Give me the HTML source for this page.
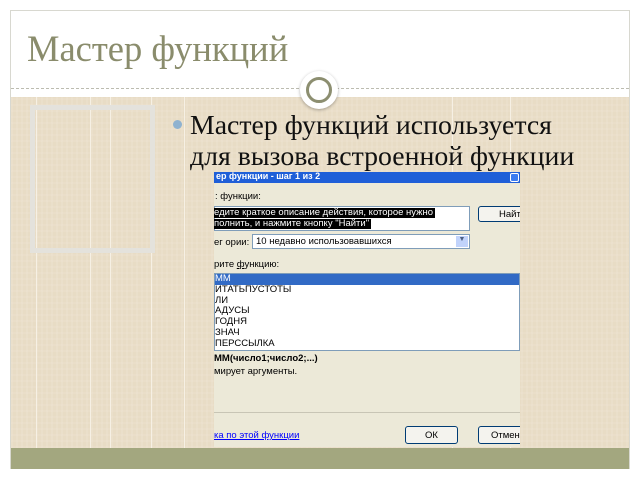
<!DOCTYPE html>
<html><head><meta charset="utf-8"><style>
*{margin:0;padding:0;box-sizing:border-box}
body{width:640px;height:480px;background:#fff;position:relative;overflow:hidden;font-family:"Liberation Sans",sans-serif}
.frame{position:absolute;left:10px;top:10px;width:620px;height:459px;border:1px solid #d8d8d0;background:#fff}
.title{position:absolute;left:27px;top:27px;font-family:"Liberation Serif",serif;font-size:36.5px;color:#8a8c6c}
.dash{position:absolute;left:11px;top:88px;width:618px;border-top:1px dashed #bcbcb0}
.tan{position:absolute;left:11px;top:97px;width:618px;height:351px;background:#e8dcc5;
background-image:repeating-linear-gradient(90deg,rgba(255,255,255,.08) 0 2px,transparent 2px 5px),repeating-linear-gradient(0deg,rgba(255,255,255,.07) 0 2px,transparent 2px 6px)}
.vl{position:absolute;top:97px;width:1px;height:351px;background:#f6f0e4}
.sq{position:absolute;left:30px;top:105px;width:125px;height:148px;border:5px solid #e4e2dc}
.circ{position:absolute;left:300px;top:71px;width:38px;height:38px;border-radius:50%;background:#fff;box-shadow:0 1px 3px rgba(0,0,0,.3)}
.circ:after{content:"";position:absolute;left:6px;top:6px;width:26px;height:26px;border-radius:50%;border:3px solid #8c8e70;box-sizing:border-box}
.olive{position:absolute;left:11px;top:448px;width:618px;height:21px;background:#a3a77f}
.bul{position:absolute;left:173px;top:120px;width:9px;height:9px;border-radius:50%;background:#8fb2d0}
.txt{position:absolute;left:190px;top:110px;font-family:"Liberation Serif",serif;font-size:27.8px;line-height:31px;color:#111;white-space:nowrap}
.shot{position:absolute;left:214px;top:172px;width:306px;height:275px;background:#ece9d8;font-size:9.5px;color:#000;overflow:hidden}
.tb{position:absolute;left:0;top:0;width:306px;height:11px;background:#1f5fd8;color:#fff;font-weight:bold;font-size:9px;line-height:9px;padding-left:2px}
.ab{position:absolute;white-space:nowrap}
</style></head><body>
<div class="frame"></div>
<div class="title">Мастер функций</div>
<div class="dash"></div>
<div class="tan"></div>
<div class="vl" style="left:36px"></div>
<div class="vl" style="left:90px"></div>
<div class="vl" style="left:110px"></div>
<div class="vl" style="left:151px"></div>
<div class="vl" style="left:184px"></div>
<div class="vl" style="left:452px"></div>
<div class="vl" style="left:510px"></div>
<div class="sq"></div>
<div class="circ"></div>
<div class="olive"></div>
<div class="bul"></div>
<div class="txt">Мастер функций используется<br>для вызова встроенной функции</div>
<div class="shot">
<div class="tb">ер функции - шаг 1 из 2</div>
<div class="ab" style="left:296px;top:1px;width:9px;height:9px;background:#3c7cf0;border:1px solid #fff;border-radius:2px"></div>
<div class="ab" style="left:1px;top:19px">: функции:</div>
<div class="ab" style="left:0;top:34px;width:256px;height:25px;background:#fff;border:1px solid #7f9db9"></div>
<div class="ab" style="left:0;top:36px;background:#000;color:#fff;line-height:10px;padding-right:2px">едите краткое описание действия, которое нужно</div>
<div class="ab" style="left:0;top:47px;background:#000;color:#fff;line-height:10px;padding-right:2px">полнить, и нажмите кнопку "Найти"</div>
<div class="ab" style="left:264px;top:34px;width:50px;height:16px;background:#f4f3ee;border:1px solid #003c74;border-radius:3px;padding:2px 0 0 20px">Найти</div>
<div class="ab" style="left:0;top:65px">ег ории:</div>
<div class="ab" style="left:38px;top:62px;width:218px;height:15px;background:#fff;border:1px solid #7f9db9;padding:1px 3px">10 недавно использовавшихся</div>
<div class="ab" style="left:242px;top:64px;width:12px;height:11px;background:#c1d3fb;color:#4d6185;font-size:7px;text-align:center">▼</div>
<div class="ab" style="left:0;top:87px">рите <u>ф</u>ункцию:</div>
<div class="ab" style="left:0;top:101px;width:306px;height:78px;background:#fff;border:1px solid #7f9db9;line-height:10.8px">
<div style="background:#316ac5;color:#fff">ММ</div><div>ИТАТЬПУСТОТЫ</div><div>ЛИ</div><div>АДУСЫ</div><div>ГОДНЯ</div><div>ЗНАЧ</div><div>ПЕРССЫЛКА</div></div>
<div class="ab" style="left:0;top:181px;font-weight:bold">ММ(число1;число2;...)</div>
<div class="ab" style="left:0;top:194px">мирует аргументы.</div>
<div class="ab" style="left:0;top:240px;width:306px;border-top:1px solid #c8c5b5"></div>
<div class="ab" style="left:0;top:258px;color:#00f;text-decoration:underline">ка по этой функции</div>
<div class="ab" style="left:191px;top:254px;width:53px;height:18px;background:#f4f3ee;border:1px solid #003c74;border-radius:3px;text-align:center;padding-top:3px">ОК</div>
<div class="ab" style="left:264px;top:254px;width:50px;height:18px;background:#f4f3ee;border:1px solid #003c74;border-radius:3px;padding:3px 0 0 12px">Отмена</div>
</div>
</body></html>
